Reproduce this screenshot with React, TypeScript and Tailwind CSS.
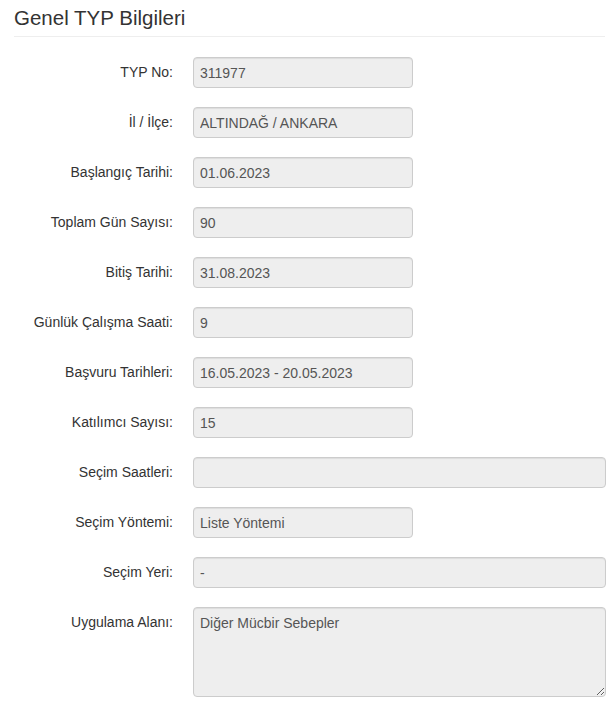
const rows: { label: string; value: string; wide?: boolean; area?: boolean }[] = [
  { label: "TYP No:", value: "311977" },
  { label: "İl / İlçe:", value: "ALTINDAĞ / ANKARA" },
  { label: "Başlangıç Tarihi:", value: "01.06.2023" },
  { label: "Toplam Gün Sayısı:", value: "90" },
  { label: "Bitiş Tarihi:", value: "31.08.2023" },
  { label: "Günlük Çalışma Saati:", value: "9" },
  { label: "Başvuru Tarihleri:", value: "16.05.2023 - 20.05.2023" },
  { label: "Katılımcı Sayısı:", value: "15" },
  { label: "Seçim Saatleri:", value: "", wide: true },
  { label: "Seçim Yöntemi:", value: "Liste Yöntemi" },
  { label: "Seçim Yeri:", value: "-", wide: true },
  { label: "Uygulama Alanı:", value: "Diğer Mücbir Sebepler", wide: true, area: true },
];

function Field({ value, wide, area }: { value: string; wide?: boolean; area?: boolean }) {
  const base =
    "block rounded-[4px] border border-[#ccc] bg-[#eee] px-[6px] text-[14px] text-[#555] shadow-[inset_0_1px_1px_rgba(0,0,0,0.075)] cursor-not-allowed";
  if (area) {
    return (
      <textarea
        readOnly
        disabled
        value={value}
        className={`${base} h-[90px] w-[413px] resize-y py-[6px] leading-[18px]`}
      />
    );
  }
  return (
    <input
      readOnly
      disabled
      value={value}
      className={`${base} h-[31px] ${wide ? "w-[413px]" : "w-[220px]"}`}
    />
  );
}

export default function App() {
  return (
    <div
      className="min-h-screen bg-white pl-[14px] pr-[6px] pt-[4px] text-[#333]"
      style={{ fontFamily: '"Liberation Sans", Arial, sans-serif' }}
    >
      <h3 className="text-[20.5px] leading-[28px] font-normal">Genel TYP Bilgileri</h3>
      <div className="mt-[4px] mr-[1px] border-t border-[#eee]" />
      <div className="mt-[20px] flex flex-col gap-[19px]">
        {rows.map((r) => (
          <div key={r.label} className="flex items-start">
            <label className="w-[159px] shrink-0 pt-[7px] text-right text-[14px] leading-[17px]">
              {r.label}
            </label>
            <div className="ml-[20px] shrink-0">
              <Field value={r.value} wide={r.wide} area={r.area} />
            </div>
          </div>
        ))}
      </div>
    </div>
  );
}
